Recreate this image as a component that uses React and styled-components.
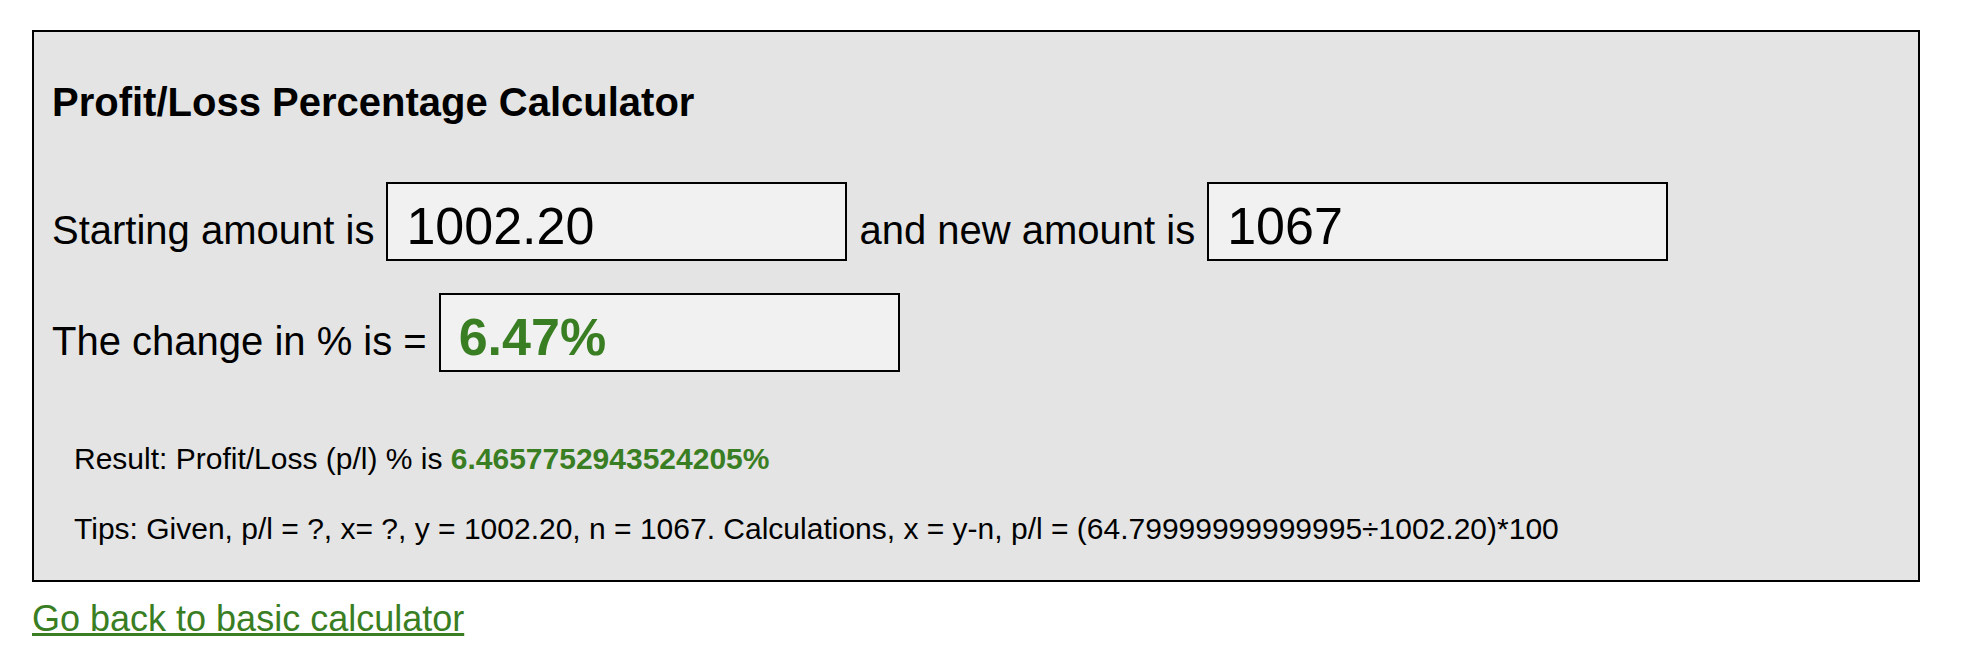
import styled, { createGlobalStyle } from "styled-components";

const GlobalStyle = createGlobalStyle`
  body {
    margin: 0;
    background: #ffffff;
    font-family: "Liberation Sans", Arial, sans-serif;
    color: #000000;
  }
`

const Page = styled.div`
  padding: 30px 32px 0 32px;
`

const Calculator = styled.section`
  background: #e4e4e4;
  border: 2px solid #000000;
  padding: 47px 18px 34px 18px;
  width: 1888px;
  box-sizing: border-box;
`

const Title = styled.h2`
  font-size: 40px;
  font-weight: bold;
  line-height: 46px;
  margin: 0 0 57px 0;
`

const Row = styled.div`
  display: flex;
  align-items: baseline;
  gap: 12px;
  font-size: 40px;
  margin-bottom: ${(p) => p.$spacing || 0}px;
`

const Amount = styled.input`
  width: 461px;
  height: 79px;
  box-sizing: border-box;
  border: 2px solid #000000;
  background: #f1f1f1;
  padding: 8px 18px 0 18px;
  font-family: "Liberation Sans", Arial, sans-serif;
  font-size: 52px;
  font-weight: ${(p) => (p.$result ? "bold" : "normal")};
  color: ${(p) => (p.$result ? "#3a7e23" : "#000000")};
  outline: none;
`

const Summary = styled.div`
  padding: 70px 0 0 22px;
  display: flex;
  flex-direction: column;
  gap: 35px;
`

const Line = styled.p`
  margin: 0;
  font-size: 30px;
  line-height: 34.5px;
`

const Highlight = styled.strong`
  color: #3a7e23;
`

const BackLink = styled.a`
  display: inline-block;
  margin-top: 16px;
  font-size: 36px;
  color: #3a7e23;
  text-decoration: underline;
`

const App = () => {
  const start = "1002.20"
  const next = "1067"
  const diff = Number(next) - Number(start)
  const pct = (diff / Number(start)) * 100

  return (
    <Page>
      <GlobalStyle />
      <Calculator>
        <Title>Profit/Loss Percentage Calculator</Title>
        <Row $spacing={32}>
          <span>Starting amount is</span>
          <Amount readOnly value={start} />
          <span>and new amount is</span>
          <Amount readOnly value={next} />
        </Row>
        <Row>
          <span>The change in % is =</span>
          <Amount readOnly $result value={pct.toFixed(2) + "%"} />
        </Row>
        <Summary>
          <Line>
            Result: Profit/Loss (p/l) % is <Highlight>{pct + "%"}</Highlight>
          </Line>
          <Line>
            Tips: Given, p/l = ?, x= ?, y = {start}, n = {next}. Calculations, x = y-n, p/l = ({diff}÷{start})*100
          </Line>
        </Summary>
      </Calculator>
      <BackLink href="#">Go back to basic calculator</BackLink>
    </Page>
  )
}

export default App;
